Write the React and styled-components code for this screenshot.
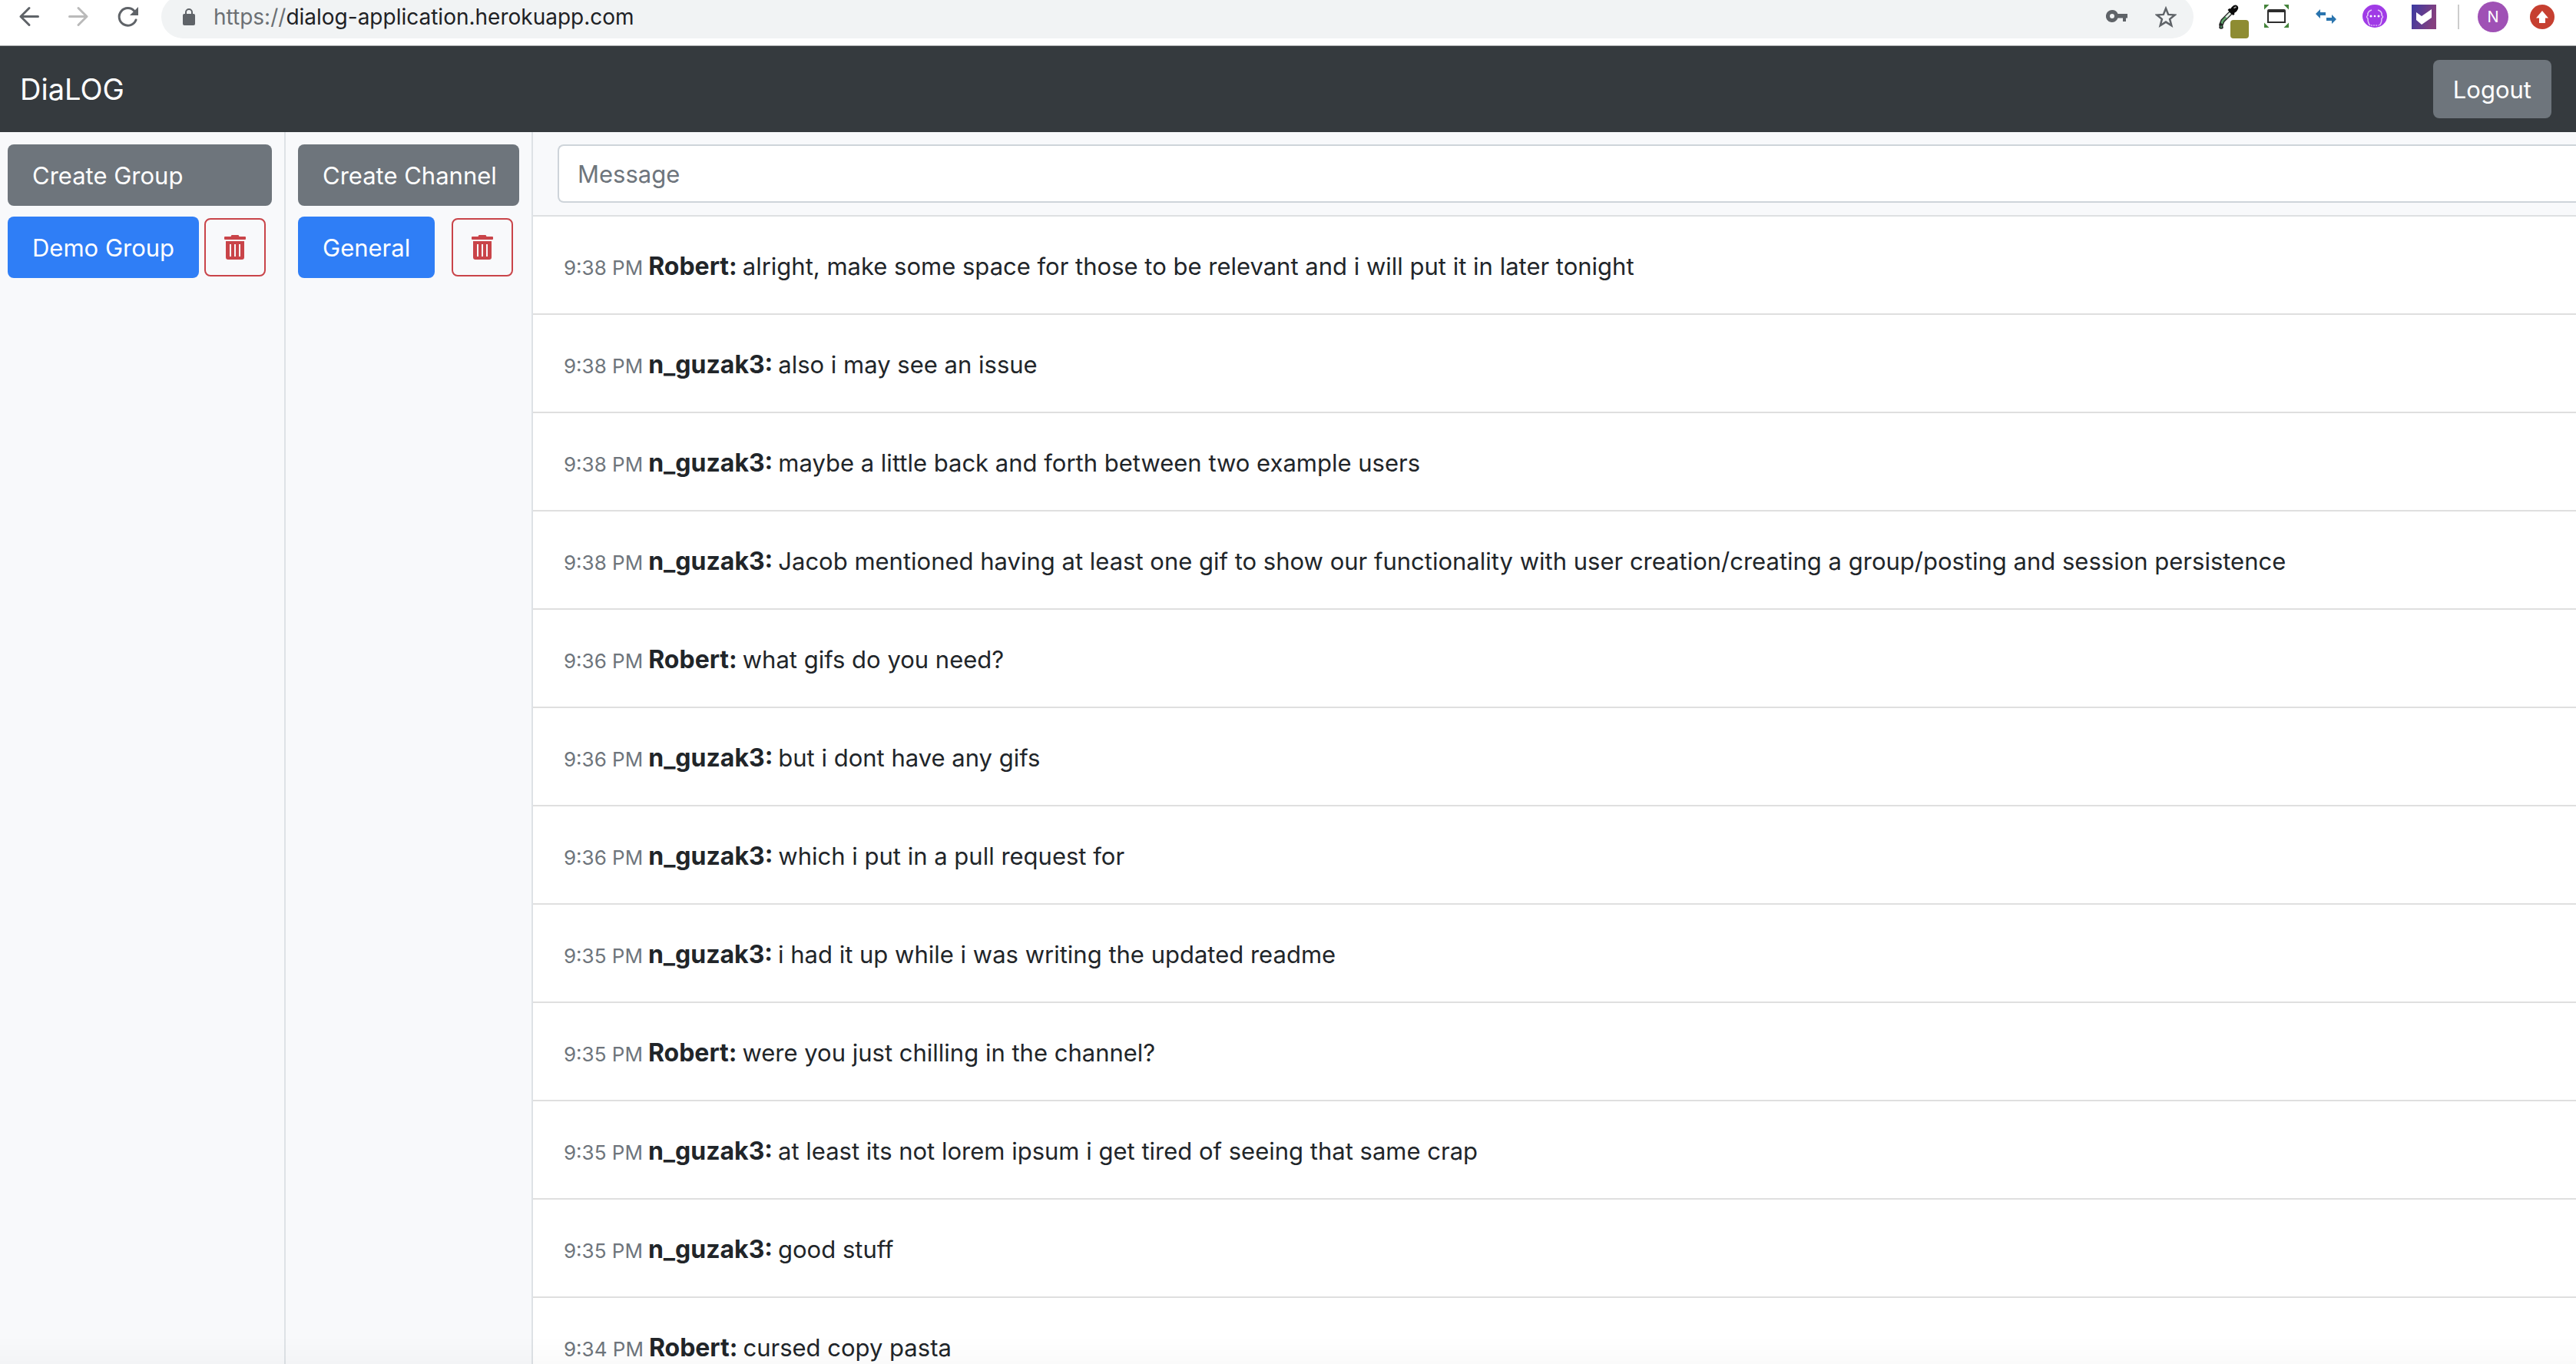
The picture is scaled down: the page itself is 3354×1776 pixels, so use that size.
import React from "react";
import styled, { createGlobalStyle } from "styled-components";

const font = `Inter, "Liberation Sans", sans-serif`;

const GlobalStyle = createGlobalStyle`
  *, *::before, *::after { box-sizing: border-box; }
  html, body, #root { height: 100%; }
  body {
    margin: 0;
    overflow: hidden;
    background: #fff;
    color: #212529;
    font-family: ${font};
    font-size: 31px;
    line-height: 48px;
  }
  button, input { font-family: inherit; font-size: inherit; line-height: inherit; }
`;

const Page = styled.div`
  display: flex;
  flex-direction: column;
  height: 100vh;

  &::after {
    content: "";
    position: fixed;
    inset: auto 0 0 0;
    height: 36px;
    background: linear-gradient(rgba(0, 0, 0, 0), rgba(0, 0, 0, 0.02));
    pointer-events: none;
  }
`;

const BrowserBar = styled.header`
  display: flex;
  align-items: flex-start;
  flex: none;
  height: 60px;
  padding: 0 28px 0 20px;
  border-bottom: 1px solid #a9abad;
`;

const IconButton = styled.button`
  position: relative;
  display: flex;
  flex: none;
  margin: 0;
  padding: 0;
  border: 0;
  background: none;
`;

const NavButtons = styled.div`
  display: flex;
  gap: 24px;
  padding-top: 2px;
`;

const AddressBar = styled.div`
  display: flex;
  flex: 1;
  align-items: center;
  height: 56px;
  margin: -6px 0 0 22px;
  padding: 0 22px;
  border-radius: 28px;
  background: #f1f3f4;
`;

const Url = styled.a`
  flex: 1;
  margin-left: 18px;
  color: #202124;
  font-size: 28px;
  line-height: 40px;
  text-decoration: none;
`;

const Scheme = styled.span`
  color: #6b6f73;
`;

const AddressActions = styled.div`
  display: flex;
  gap: 36px;
`;

const Extensions = styled.div`
  display: flex;
  gap: 32px;
  margin: 6px 28px 0;
`;

const ColorBadge = styled.span`
  position: absolute;
  top: 20px;
  left: 20px;
  width: 24px;
  height: 24px;
  border-radius: 4px;
  background: #8e8c32;
`;

const Separator = styled.span`
  width: 2px;
  height: 32px;
  margin: 6px 24px 0 0;
  background: #ccc;
`;

const Avatar = styled.button`
  width: 40px;
  height: 40px;
  margin: 2px 28px 0 0;
  padding: 0;
  border: 0;
  border-radius: 50%;
  background: #9f51b5;
  color: #fff;
  font-size: 20px;
  line-height: 40px;
`;

const UpdateSlot = styled.div`
  padding-top: 6px;
`;

const Navbar = styled.nav`
  display: flex;
  flex: none;
  align-items: center;
  justify-content: space-between;
  height: 112px;
  padding: 0 32px 0 26px;
  background: #353a3e;
`;

const Brand = styled.a`
  color: #fff;
  font-size: 38px;
  line-height: 60px;
  text-decoration: none;
`;

const Button = styled.button`
  flex: none;
  height: ${(p) => (p.$compact ? 76 : 80)}px;
  padding: 2px ${(p) => (p.$compact ? 26 : 32)}px 0;
  border: 0;
  border-radius: 8px;
  background: ${(p) => (p.$active ? "#2f7ef6" : "#6e757c")};
  color: #fff;
  text-align: left;
  white-space: nowrap;
`;

const Main = styled.main`
  display: flex;
  flex: 1;
  min-height: 0;
`;

const Sidebar = styled.aside`
  display: flex;
  flex: none;
  flex-direction: column;
  gap: 14px;
  width: ${(p) => p.$width}px;
  padding: 16px 16px 0 ${(p) => p.$left}px;
  border-right: 2px solid #dee2e6;
  background: #f8f9fb;
`;

const SidebarRow = styled.div`
  display: flex;
  align-items: center;
  justify-content: space-between;
  padding-right: 8px;
`;

const DeleteButton = styled.button`
  display: flex;
  align-items: center;
  justify-content: center;
  width: 80px;
  height: 76px;
  padding: 0;
  border: 2px solid #c94449;
  border-radius: 8px;
  background: transparent;
`;

const Chat = styled.section`
  flex: 1;
  min-width: 0;
  overflow: hidden;
`;

const Composer = styled.form`
  height: 110px;
  padding: 16px 0 0 32px;
  border-bottom: 2px solid #dee0e2;
  background: #f8f9fb;
`;

const MessageInput = styled.input`
  display: block;
  width: 100%;
  height: 76px;
  padding: 0 24px;
  border: 2px solid #ced4da;
  border-right: 0;
  border-radius: 8px 0 0 8px;
  background: #fff;
  color: #495057;
  &::placeholder { color: #6e757c; opacity: 1; }
`;

const Messages = styled.ul`
  margin: 0;
  padding: 0;
  list-style: none;
`;

const Message = styled.li`
  display: flex;
  align-items: baseline;
  gap: 7px;
  height: 128px;
  padding: 41px 40px 0;
  border-bottom: 2px solid #dfdfdf;
  white-space: nowrap;
`;

const Time = styled.time`
  color: #6e757c;
  font-size: 26px;
`;

const Author = styled.strong`
  font-size: 32px;
  font-weight: 700;
`;

const MessageText = styled.span`
  flex: 1;
`;

const messages = [
  ["9:38 PM", "Robert", "alright, make some space for those to be relevant and i will put it in later tonight"],
  ["9:38 PM", "n_guzak3", "also i may see an issue"],
  ["9:38 PM", "n_guzak3", "maybe a little back and forth between two example users"],
  ["9:38 PM", "n_guzak3", "Jacob mentioned having at least one gif to show our functionality with user creation/creating a group/posting and session persistence"],
  ["9:36 PM", "Robert", "what gifs do you need?"],
  ["9:36 PM", "n_guzak3", "but i dont have any gifs"],
  ["9:36 PM", "n_guzak3", "which i put in a pull request for"],
  ["9:35 PM", "n_guzak3", "i had it up while i was writing the updated readme"],
  ["9:35 PM", "Robert", "were you just chilling in the channel?"],
  ["9:35 PM", "n_guzak3", "at least its not lorem ipsum i get tired of seeing that same crap"],
  ["9:35 PM", "n_guzak3", "good stuff"],
  ["9:34 PM", "Robert", "cursed copy pasta"],
];

const TrashIcon = () => (
  <svg width="28" height="32" viewBox="0 0 28 32" fill="#c94449">
    <path d="M1 2h7.500l1-2h9l1 2H27a1 1 0 0 1 1 1v2a1 1 0 0 1-1 1H1a1 1 0 0 1-1-1V3a1 1 0 0 1 1-1z" />
    <path fillRule="evenodd" d="M2 8h24v21a3 3 0 0 1-3 3H5a3 3 0 0 1-3-3zm5 4v16h2V12zm6 0v16h2V12zm6 0v16h2V12z" />
  </svg>
);

const BackIcon = () => (
  <svg width="40" height="40" viewBox="0 0 40 40" fill="none" stroke="#5f6368" strokeWidth="3" strokeLinecap="round" strokeLinejoin="round">
    <path d="M29.500 19.500H7M18 8.500l-11 11 11 11" />
  </svg>
);

const ForwardIcon = () => (
  <svg width="40" height="40" viewBox="0 0 40 40" fill="none" stroke="#bababa" strokeWidth="3" strokeLinecap="round" strokeLinejoin="round">
    <path d="M6.500 19.500H29M18 8.500l11 11-11 11" />
  </svg>
);

const ReloadIcon = () => (
  <svg width="40" height="40" viewBox="0 0 40 40">
    <path d="M27 12.500A11.300 11.300 0 1 0 29 24" fill="none" stroke="#5f6368" strokeWidth="3" strokeLinecap="round" />
    <path d="M32 7v11H21z" fill="#5f6368" />
  </svg>
);

const LockIcon = () => (
  <svg width="28" height="28" viewBox="0 0 28 28">
    <path d="M10 12V8a4 4 0 0 1 8 0v4" fill="none" stroke="#5f6368" strokeWidth="2" />
    <rect x="6" y="10" width="16" height="15" rx="2" fill="#5f6368" />
  </svg>
);

const KeyIcon = () => (
  <svg width="28" height="28" viewBox="0 0 28 28" fill="#5f6368">
    <path fillRule="evenodd" d="M8 5a8 8 0 1 0 7.500 10.500H22V20h4v-4.500h2V10H15.500A8 8 0 0 0 8 5zm0 5a3 3 0 1 1 0 6 3 3 0 0 1 0-6z" />
  </svg>
);

const StarIcon = () => (
  <svg width="28" height="28" viewBox="0 0 28 28" fill="none" stroke="#5f6368" strokeWidth="2.500">
    <path d="M14 3l3.200 7.900 8.500.6-6.600 5.400 2.200 8.300-7.300-4.600-7.300 4.600 2.200-8.300-6.600-5.400 8.500-.6z" />
  </svg>
);

const DropperIcon = () => (
  <svg width="32" height="32" viewBox="0 0 32 32">
    <path d="M20 11 10 21l-2 5" fill="none" stroke="#222" strokeWidth="5.500" strokeLinecap="round" />
    <path d="M20 11l-6 6" stroke="#dfeee2" strokeWidth="3" />
    <path d="M14.500 16.500 10 21l-1.500 4" fill="none" stroke="#5fa36b" strokeWidth="2.800" />
    <path d="M22 3q4-4 7-1.500 3 3-1 7.500l-3 2 .5 1.500-2 1.500-7-7 2-2 1.500.5z" fill="#0a0a0a" />
    <path d="M24.500 4.500l3-1.500" stroke="#aaa" strokeWidth="1.500" />
    <path d="M8 25q-4 6 0 6t0-6z" fill="#4f8f63" stroke="#222" strokeWidth="1.500" />
  </svg>
);

const FrameIcon = () => (
  <svg width="32" height="32" viewBox="0 0 32 32">
    <path d="M0 0h6.500L0 6.500zM32 0v6.500L25.500 0zM0 30v-6.500L6.500 30zM32 30h-6.500l6.500-6.500z" fill="#43833a" />
    <path fillRule="evenodd" d="M6 6h20a2 2 0 0 1 2 2v16H4V8a2 2 0 0 1 2-2zm0 4v12h20V10z" fill="#2d2d2d" />
  </svg>
);

const ArrowsIcon = () => (
  <svg width="32" height="32" viewBox="0 0 32 32" fill="#2a74ae">
    <path d="M3 12l6-6v4h7v4H9v4zM30 19l-6-6v4h-7v4h7v4z" />
  </svg>
);

const RobotIcon = () => (
  <svg width="32" height="32" viewBox="0 0 32 32">
    <ellipse cx="16" cy="15" rx="16" ry="15" fill="#a03be6" />
    <path d="M12 7q-6 2-5 7-3 2 0 4 0 6 3 9M20 7q6 2 5 7 3 2 0 4 0 6-3 9" fill="none" stroke="#e3c4f8" strokeWidth="1.500" />
    <path d="M11 27h10" stroke="#d6a6f5" strokeWidth="1.500" strokeDasharray="2 1" />
    <g fill="#fff"><circle cx="11" cy="15" r="1.500" /><circle cx="16" cy="15" r="1.300" /><circle cx="21" cy="15" r="1.500" /></g>
  </svg>
);

const CheckIcon = () => (
  <svg width="32" height="32" viewBox="0 0 32 32">
    <defs>
      <linearGradient id="checkFill" x1="0" y1="0" x2="1" y2="0.300">
        <stop offset="0" stopColor="#3b3aa2" />
        <stop offset="1" stopColor="#85407f" />
      </linearGradient>
    </defs>
    <path d="M0 0h32v32H0z" fill="url(#checkFill)" />
    <path d="M6 10l7 5 13-9v11l-13 9-7-6z" fill="#fff" />
  </svg>
);

const UpdateIcon = () => (
  <svg width="32" height="32" viewBox="0 0 32 32">
    <circle cx="16" cy="16" r="16" fill="#c63f30" />
    <path d="M16 8l8 9.500h-4V24h-8v-6.500H8z" fill="#fff" />
  </svg>
);

const SidebarItem = ({ label }) => (
  <SidebarRow>
    <Button $active>{label}</Button>
    <DeleteButton aria-label={`Delete ${label}`}><TrashIcon /></DeleteButton>
  </SidebarRow>
);

export default function App() {
  return (
    <Page>
      <GlobalStyle />
      <BrowserBar>
        <NavButtons>
          <IconButton aria-label="Back"><BackIcon /></IconButton>
          <IconButton aria-label="Forward"><ForwardIcon /></IconButton>
          <IconButton aria-label="Reload"><ReloadIcon /></IconButton>
        </NavButtons>
        <AddressBar>
          <LockIcon />
          <Url href="#"><Scheme>https://</Scheme>dialog-application.herokuapp.com</Url>
          <AddressActions>
            <IconButton aria-label="Passwords"><KeyIcon /></IconButton>
            <IconButton aria-label="Bookmark"><StarIcon /></IconButton>
          </AddressActions>
        </AddressBar>
        <Extensions>
          <IconButton aria-label="Color picker"><DropperIcon /><ColorBadge /></IconButton>
          <IconButton aria-label="Window resizer"><FrameIcon /></IconButton>
          <IconButton aria-label="Switch"><ArrowsIcon /></IconButton>
          <IconButton aria-label="Assistant"><RobotIcon /></IconButton>
          <IconButton aria-label="Checker"><CheckIcon /></IconButton>
        </Extensions>
        <Separator />
        <Avatar aria-label="Profile N">N</Avatar>
        <UpdateSlot>
          <IconButton aria-label="Update"><UpdateIcon /></IconButton>
        </UpdateSlot>
      </BrowserBar>
      <Navbar>
        <Brand href="#">DiaLOG</Brand>
        <Button $compact>Logout</Button>
      </Navbar>
      <Main>
        <Sidebar $width={372} $left={10}>
          <Button>Create Group</Button>
          <SidebarItem label="Demo Group" />
        </Sidebar>
        <Sidebar $width={322} $left={16}>
          <Button>Create Channel</Button>
          <SidebarItem label="General" />
        </Sidebar>
        <Chat>
          <Composer><MessageInput aria-label="Message" placeholder="Message" /></Composer>
          <Messages>
            {messages.map(([time, author, text], i) => (
              <Message key={i}>
                <Time>{time}</Time>
                <Author>{author}:</Author>
                <MessageText>{text}</MessageText>
              </Message>
            ))}
          </Messages>
        </Chat>
      </Main>
    </Page>
  );
}
